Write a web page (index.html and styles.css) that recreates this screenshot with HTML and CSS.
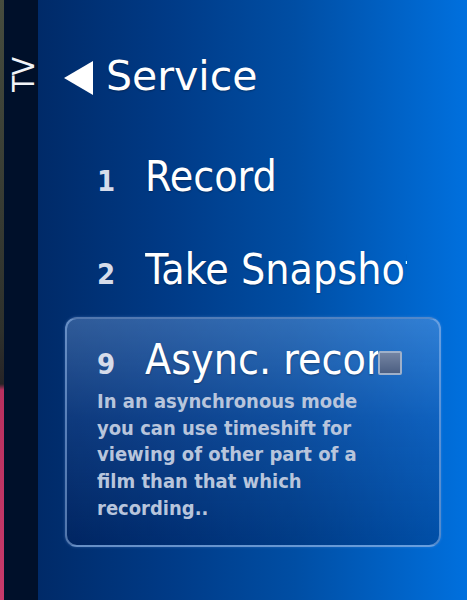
FILE: index.html
```html
<!DOCTYPE html>
<html lang="en">
<head>
    <meta charset="UTF-8">
    <meta name="viewport" content="width=device-width, initial-scale=1.0">
    <title>Service</title>
    <link rel="stylesheet" href="styles.css">
</head>
<body>
    <div class="screen">
        <div class="edge"></div>
        <div class="side">
            <span class="side-label">TV</span>
        </div>

        <div class="main">
            <div class="header">
                <svg class="back" width="29" height="34" viewBox="0 0 29 34">
                    <polygon points="0,17 29,0 29,34" fill="#fff"/>
                </svg>
                <span class="title">Service</span>
            </div>

            <div class="menu">
                <div class="item">
                    <span class="num">1</span>
                    <span class="label">Record</span>
                </div>
                <div class="item">
                    <span class="num">2</span>
                    <span class="label">Take Snapshot</span>
                </div>

                <div class="item-card">
                    <div class="item-head">
                        <span class="num">9</span>
                        <span class="label short">Async. record</span>
                        <span class="check"></span>
                    </div>
                    <p class="desc">In an asynchronous mode you can use timeshift for viewing of other part of a film than that which recording..</p>
                </div>
            </div>
        </div>
    </div>
</body>
</html>
```

FILE: styles.css
```css
body {
    margin: 0;
    padding: 0;
    background-color: #00102a;
    font-family: 'DejaVu Sans', sans-serif;
}

.screen {
    display: flex;
    width: 467px;
    height: 600px;
    overflow: hidden;
}

.edge {
    width: 4px;
    background: linear-gradient(to bottom, #464c3e 0, #2e312c 55%, #262427 64%, #b8305f 65%, #c73a6b 100%);
}

.side {
    width: 34px;
    background-color: #00102a;
    display: flex;
    justify-content: center;
    padding-top: 56px;
    box-sizing: border-box;
}

.side-label {
    display: block;
    writing-mode: vertical-rl;
    transform: rotate(180deg);
    font-family: 'DejaVu Sans Condensed', sans-serif;
    font-weight: 300;
    font-size: 30px;
    line-height: 24px;
    height: 36px;
    color: #f2f4f8;
    margin-left: 6px;
}

.main {
    flex: 1;
    background: linear-gradient(to right, #002a68 0%, #003a86 30%, #004ea4 60%, #0070de 100%);
    padding-left: 26px;
}

.header {
    display: flex;
    align-items: center;
    margin-top: 52px;
    height: 48px;
}

.back {
    margin-top: 4px;
}

.title {
    margin-left: 13px;
    font-size: 41px;
    line-height: 48px;
    color: #fff;
    text-shadow: 0 1px 2px rgba(0, 0, 0, 0.3);
}

.menu {
    margin-top: 52px;
}

.item,
.item-head {
    display: flex;
    align-items: baseline;
}

.item {
    height: 93px;
    padding-left: 33px;
}

.num {
    width: 48px;
    flex-shrink: 0;
    font-family: 'DejaVu Sans Condensed', sans-serif;
    font-weight: bold;
    font-size: 29px;
    color: #d6dcea;
}

.label {
    display: block;
    width: 262px;
    overflow: hidden;
    white-space: nowrap;
    font-family: 'DejaVu Sans Condensed', sans-serif;
    font-size: 42.5px;
    line-height: 50px;
    color: #fff;
    text-shadow: 0 1px 2px rgba(0, 0, 0, 0.3);
}

.label.short {
    width: 233px;
}

.item-card {
    width: 376px;
    box-sizing: border-box;
    margin-top: -21px;
    margin-left: 1px;
    padding: 16px 20px 24px 30px;
    border: 2px solid rgba(150, 185, 235, 0.55);
    border-radius: 12px;
    background: linear-gradient(to bottom, rgba(120, 160, 215, 0.4) 0%, rgba(40, 80, 150, 0.35) 45%, rgba(0, 20, 70, 0.32) 100%);
    box-shadow: 0 0 3px rgba(120, 170, 240, 0.35);
}

.check {
    align-self: flex-start;
    margin-top: 16px;
    width: 20px;
    height: 20px;
    border: 2px solid #9fb0c9;
    border-radius: 2px;
    background: linear-gradient(to bottom, #7484a2, #4c5f82);
}

.desc {
    margin: 2.8px 0 0 0;
    font-family: 'DejaVu Sans Condensed', sans-serif;
    font-weight: bold;
    font-size: 20px;
    line-height: 26.7px;
    color: #b8c5dc;
    width: 290px;
}
```
